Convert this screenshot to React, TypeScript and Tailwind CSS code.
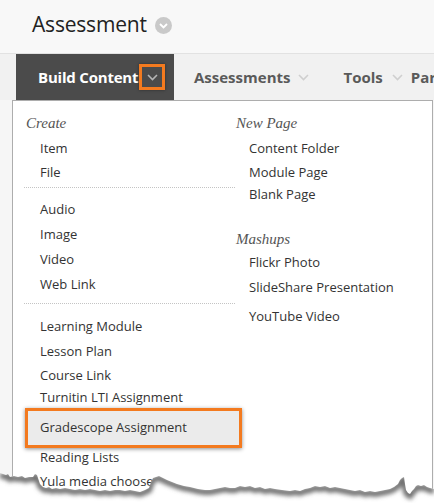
import React from "react";

const sans = { fontFamily: '"Open Sans", "Liberation Sans", sans-serif' };
const serif = { fontFamily: '"Liberation Serif", "DejaVu Serif", serif' };

function Chevron({ className = "", color = "#bdbdbd" }: { className?: string; color?: string }) {
  return (
    <svg className={className} width="11" height="7" viewBox="0 0 11 7">
      <path d="M1 1 L5.5 5.5 L10 1" fill="none" stroke={color} strokeWidth="1.6" />
    </svg>
  );
}

const edge: [number, number][] = [
  [0, 473], [3, 474], [6, 475], [8, 474], [10, 477], [14, 476], [18, 477], [22, 476], [25, 478], [29, 477], [33, 477],
  [35, 474], [37, 475], [40, 484], [43, 487], [46, 488], [49, 487], [52, 489], [56, 488], [60, 489], [65, 488], [70, 489],
  [75, 490], [80, 489], [85, 490], [90, 489], [95, 490], [100, 491], [105, 490], [110, 491], [115, 490], [120, 490],
  [125, 491], [130, 490], [135, 491], [140, 492], [145, 490], [149, 488], [151, 482], [153, 478], [156, 477], [159, 476],
  [163, 478], [167, 480], [172, 482], [177, 484], [184, 486], [190, 487], [198, 489], [205, 490], [210, 490], [215, 489],
  [220, 488], [225, 487], [230, 488], [235, 488],
  [240, 486], [245, 487], [250, 486], [255, 488], [260, 487], [265, 489], [270, 488], [275, 489], [282, 490], [290, 491],
  [295, 490], [300, 491], [305, 489], [310, 488], [315, 486], [320, 487], [325, 486], [330, 488], [335, 487], [340, 488],
  [345, 489], [350, 490], [355, 491], [360, 490], [365, 492], [370, 491], [375, 492], [380, 491], [385, 490], [390, 489],
  [394, 487], [398, 484], [400, 480], [402, 478], [404, 477], [405, 484], [406, 490], [408, 493], [410, 494], [412, 491],
  [414, 489], [416, 486], [418, 485], [421, 486], [424, 485], [427, 487], [430, 488], [434, 489],
];

function TornEdge() {
  const top = 460;
  const pts = edge.map(([x, y]) => `${x},${y - top}`).join(" L");
  const shadowPts = edge.map(([x, y]) => `${x},${y - top + 2}`).join(" L");
  const below = `M${pts} L434,43 L0,43 Z`;
  return (
    <svg className="absolute left-0 top-[460px]" width="434" height="43" viewBox="0 0 434 43">
      <defs>
        <clipPath id="belowClip">
          <path d={below} />
        </clipPath>
        <filter id="blur" x="-5%" y="-50%" width="110%" height="200%">
          <feGaussianBlur stdDeviation="2" />
        </filter>
      </defs>
      <path d={below} fill="#ffffff" />
      <g clipPath="url(#belowClip)">
        <path d={`M${shadowPts}`} fill="none" stroke="#6f6f6f" strokeWidth="6" filter="url(#blur)" />
      </g>
    </svg>
  );
}

type Row = { label: string; h: number; mt?: number };

function Item({ label, h, mt = 0 }: Row) {
  return (
    <div
      className="flex items-center text-[13px] text-[#333] whitespace-nowrap"
      style={{ height: h, marginTop: mt }}
    >
      {label}
    </div>
  );
}

function Sep({ mt, mb }: { mt: number; mb: number }) {
  return (
    <div
      className="ml-[11px] w-[211px] border-t border-dotted border-[#c4c4c4]"
      style={{ marginTop: mt, marginBottom: mb }}
    />
  );
}

export default function App() {
  return (
    <div className="relative w-[434px] h-[503px] overflow-hidden bg-[#f6f6f6]" style={sans}>
      {/* Header */}
      <div className="h-[53px] bg-[#f8f8f8] flex items-center pl-[32px] pb-[4px]">
        <span className="text-[21px] text-[#222] leading-none tracking-[-0.2px]">Assessment</span>
        <span className="ml-[8px] mt-[2px] w-[17px] h-[17px] rounded-full bg-[#c9c9c9] flex items-center justify-center">
          <svg width="9" height="6" viewBox="0 0 9 6">
            <path d="M1 1 L4.5 4.5 L8 1" fill="none" stroke="#ffffff" strokeWidth="1.8" />
          </svg>
        </span>
      </div>
      <div className="h-px bg-[#e2e2e2]" />
      {/* Nav */}
      <div className="h-[46px] bg-[#f1f1f1] flex items-stretch text-[15px] font-bold whitespace-nowrap overflow-hidden">
        <div className="ml-[16px] w-[158px] shrink-0 bg-[#4b4b4b] flex items-center pl-[22px]">
          <span className="text-white tracking-[-0.2px]">Build Content</span>
          <span className="ml-[1px] shrink-0 w-[26px] h-[26px] border-[3px] border-[#f37a1f] flex items-center justify-center shadow-[0_0_3px_rgba(0,0,0,0.4)]">
            <Chevron color="#b5b5b5" />
          </span>
        </div>
        <div className="flex items-center shrink-0 ml-[20px] text-[#5a5a5a]">
          <span>Assessments</span>
          <Chevron className="ml-[8px]" color="#cfcfcf" />
        </div>
        <div className="flex items-center shrink-0 ml-[34px] text-[#5a5a5a]">
          <span>Tools</span>
          <Chevron className="ml-[9px]" color="#cfcfcf" />
        </div>
        <div className="flex items-center shrink-0 ml-[8px] text-[#5a5a5a]">
          <span>Parent</span>
        </div>
      </div>
      {/* Dropdown */}
      <div className="ml-[12px] w-[421px] h-[420px] bg-white border border-[#adadad] flex">
        <div className="w-[223px] shrink-0 pt-[10px]">
          <div className="h-[24px] flex items-center pl-[13px] italic text-[15px] text-[#555]" style={serif}>
            Create
          </div>
          <div className="pl-[27px]">
            <Item label="Item" h={24} mt={2} />
            <Item label="File" h={24} />
          </div>
          <Sep mt={2} mb={0} />
          <div className="pl-[27px]">
            <Item label="Audio" h={25} mt={9} />
            <Item label="Image" h={25} />
            <Item label="Video" h={25} />
            <Item label="Web Link" h={25} />
          </div>
          <Sep mt={6} mb={0} />
          <div className="pl-[27px]">
            <Item label="Learning Module" h={24} mt={11} />
            <Item label="Lesson Plan" h={25} />
            <Item label="Course Link" h={24} />
            <Item label="Turnitin LTI Assignment" h={20} />
          </div>
          <div className="ml-[12px] w-[217px] h-[40px] border-[3px] border-[#f37a1f] bg-[#ebebeb] flex items-center pl-[12px] text-[13px] text-[#333] whitespace-nowrap shadow-[0_1px_4px_rgba(0,0,0,0.45)]">
            Gradescope Assignment
          </div>
          <div className="pl-[27px]">
            <Item label="Reading Lists" h={19} />
            <Item label="Yula media chooser" h={30} />
          </div>
        </div>
        <div className="flex-1 pt-[10px]">
          <div className="h-[24px] flex items-center italic text-[15px] text-[#555]" style={serif}>
            New Page
          </div>
          <div className="pl-[13px]">
            <Item label="Content Folder" h={24} mt={2} />
            <Item label="Module Page" h={24} />
            <Item label="Blank Page" h={20} />
          </div>
          <div className="h-[24px] mt-[22px] flex items-center italic text-[15px] text-[#555]" style={serif}>
            Mashups
          </div>
          <div className="pl-[13px]">
            <Item label="Flickr Photo" h={24} />
            <Item label="SlideShare Presentation" h={25} />
            <Item label="YouTube Video" h={24} mt={5} />
          </div>
        </div>
      </div>
      <TornEdge />
    </div>
  );
}
